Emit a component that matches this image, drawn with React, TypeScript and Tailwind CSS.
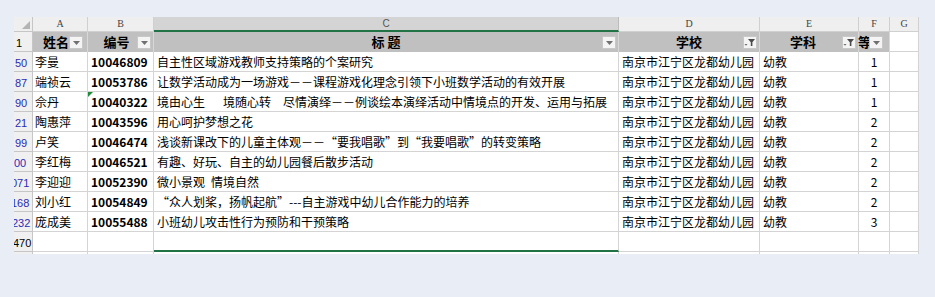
import React from "react";

const cols = "grid-cols-[19px_55px_66px_465px_141px_99px_31px_29px]";

type Row = { rn: string; rnCls: string; name: string; id: string; title: React.ReactNode; f: string; flag?: boolean };

const Gap = ({ w }: { w: string }) => <span className={`inline-block ${w}`} />;

const rows: Row[] = [
  { rn: "50", rnCls: "pl-[1px]", name: "李曼", id: "10046809", title: "自主性区域游戏教师支持策略的个案研究", f: "1" },
  { rn: "87", rnCls: "pl-[1px]", name: "端祯云", id: "10053786", title: "让数学活动成为一场游戏－－课程游戏化理念引领下小班数学活动的有效开展", f: "1" },
  {
    rn: "90",
    rnCls: "pl-[1px]",
    name: "佘丹",
    id: "10040322",
    flag: true,
    title: (
      <>
        境由心生
        <Gap w="w-[18px]" />
        境随心转
        <Gap w="w-[12px]" />
        尽情演绎－－例谈绘本演绎活动中情境点的开发、运用与拓展
      </>
    ),
    f: "1",
  },
  { rn: "21", rnCls: "pl-[1px]", name: "陶惠萍", id: "10043596", title: "用心呵护梦想之花", f: "2" },
  { rn: "99", rnCls: "pl-[1px]", name: "卢笑", id: "10046474", title: "浅谈新课改下的儿童主体观－－“要我唱歌”到“我要唱歌”的转变策略", f: "2" },
  { rn: "00", rnCls: "pl-[0px]", name: "李红梅", id: "10046521", title: "有趣、好玩、自主的幼儿园餐后散步活动", f: "2" },
  { rn: "071", rnCls: "-ml-[3px]", name: "李迎迎", id: "10052390", title: <>微小景观<Gap w="w-[6px]" />情境自然</>, f: "2" },
  { rn: "168", rnCls: "-ml-[3px]", name: "刘小红", id: "10054849", title: "“众人划桨，扬帆起航”---自主游戏中幼儿合作能力的培养", f: "2" },
  { rn: "232", rnCls: "-ml-[2px]", name: "庞成美", id: "10055488", title: "小班幼儿攻击性行为预防和干预策略", f: "3" },
];

const cjk = "font-['SimSun','Noto_Sans_CJK_SC',sans-serif]";

const DropBtn = ({ filter, cls }: { filter?: boolean; cls: string }) => (
  <span className={`absolute top-[4px] flex h-[13px] w-[14px] items-center justify-center border border-[#c8c8c8] bg-[#f4f4f4] ${cls}`}>
    {filter ? (
      <svg width="12" height="9" viewBox="0 0 12 9">
        <path d="M4 1h7L8.4 4.2V8H6.8V4.2Z" fill="#4a4a4a" />
        <path d="M0.5 6h3L2 7.8Z" fill="#6a6a6a" />
      </svg>
    ) : (
      <svg width="7" height="4" viewBox="0 0 7 4">
        <path d="M0 0h7L3.5 4Z" fill="#707070" />
      </svg>
    )}
  </span>
);

const colHead = "flex items-end justify-center border-r border-b border-[#d0d0d0] bg-[#efefef] pb-[1px] text-[10px] leading-[12px] text-[#444] font-['Liberation_Serif',serif]";
const hdrBase = `relative flex items-center border-r border-[#d8d8d8] bg-[#c0c0c0] text-[13px] font-bold text-black ${cjk}`;
const hdr = `${hdrBase} justify-center`;
const cell = `flex items-center overflow-hidden whitespace-nowrap border-r border-b border-[#d4d4d4] bg-white text-[12px] text-black ${cjk}`;
const rnCell = "flex items-end overflow-hidden whitespace-nowrap border-r border-b border-[#c6c6c6] bg-[#f0f0f0] pb-[1px] text-[11px] leading-[13px] font-['Liberation_Sans',sans-serif]";

export default function App() {
  return (
    <div className="h-[297px] w-[935px] overflow-hidden bg-[#e9edf5] pl-[14px] pt-[17px]">
      <div className={`grid w-[905px] ${cols} auto-rows-[20px] [grid-template-rows:15px]`}>
        {/* column headers */}
        <div className="relative h-[15px] border-r border-b border-[#c6c6c6] bg-[#efefef]">
          <svg className="absolute bottom-[2px] right-[2px]" width="8" height="8" viewBox="0 0 8 8">
            <path d="M8 0V8H0Z" fill="#b4b4b4" />
          </svg>
        </div>
        <div className={`${colHead} h-[15px]`}>A</div>
        <div className={`${colHead} h-[15px]`}>B</div>
        <div className="flex h-[15px] items-end justify-center border-r border-[#bdbdbd] bg-[#d4d4d4] border-b-2 border-b-[#217346] text-[10px] leading-[12px] text-[#555] font-['Liberation_Sans',sans-serif]">C</div>
        <div className={`${colHead} h-[15px]`}>D</div>
        <div className={`${colHead} h-[15px]`}>E</div>
        <div className={`${colHead} h-[15px]`}>F</div>
        <div className={`${colHead} h-[15px]`}>G</div>

        {/* row 1 */}
        <div className={`${rnCell} pl-[2px] text-black`}>1</div>
        <div className={`${hdr} pr-[8px]`}>
          姓名
          <DropBtn cls="right-[4px]" />
        </div>
        <div className={`${hdr} pr-[8px]`}>
          编号
          <DropBtn cls="right-[2px]" />
        </div>
        <div className={`${hdr} whitespace-pre`}>
          标 题
          <DropBtn cls="right-[2px]" />
        </div>
        <div className={hdr}>
          学校
          <DropBtn filter cls="right-[2px]" />
        </div>
        <div className={`${hdr} pr-[12px]`}>
          学科
          <DropBtn filter cls="right-[2px]" />
        </div>
        <div className={`${hdrBase} justify-start overflow-visible pl-[0px]`}>
          <span className="-ml-[1px]">等</span>
          <DropBtn cls="left-[10px]" />
        </div>
        <div className="border-r border-b border-[#d4d4d4] bg-white" />

        {rows.map((r) => (
          <React.Fragment key={r.rn}>
            <div className={`${rnCell} text-[#2a2ab8]`}>
              <span className={r.rnCls}>{r.rn}</span>
            </div>
            <div className={`${cell} pl-[2px]`}>{r.name}</div>
            <div className={`${cell} relative pl-[3px] font-['Liberation_Sans',sans-serif] font-bold`}>
              {r.flag && (
                <svg className="absolute left-0 top-0" width="5" height="5" viewBox="0 0 5 5">
                  <path d="M0 0H5L0 5Z" fill="#1e8c3a" />
                </svg>
              )}
              {r.id}
            </div>
            <div className={`${cell} pl-[3px]`}>{r.title}</div>
            <div className={`${cell} pl-[3px]`}>南京市江宁区龙都幼儿园</div>
            <div className={`${cell} pl-[3px]`}>幼教</div>
            <div className={`${cell} justify-center font-['Liberation_Sans',sans-serif] text-[11px]`}>{r.f}</div>
            <div className={cell} />
          </React.Fragment>
        ))}

        {/* row 470 */}
        <div className={`${rnCell} text-black`}>
          <span className="-ml-[1px]">470</span>
        </div>
        <div className={cell} />
        <div className={cell} />
        <div className={`${cell} border-b-2 border-b-[#217346]`} />
        <div className={cell} />
        <div className={cell} />
        <div className={cell} />
        <div className={cell} />

        {/* sliver */}
        <div className="h-[2px] border-r border-[#c6c6c6] bg-[#f0f0f0]" />
        <div className="h-[2px] border-r border-[#d4d4d4] bg-white" />
        <div className="h-[2px] border-r border-[#d4d4d4] bg-white" />
        <div className="h-[2px] border-r border-[#d4d4d4] bg-white" />
        <div className="h-[2px] border-r border-[#d4d4d4] bg-white" />
        <div className="h-[2px] border-r border-[#d4d4d4] bg-white" />
        <div className="h-[2px] border-r border-[#d4d4d4] bg-white" />
        <div className="h-[2px] border-r border-[#d4d4d4] bg-white" />
      </div>
    </div>
  );
}
